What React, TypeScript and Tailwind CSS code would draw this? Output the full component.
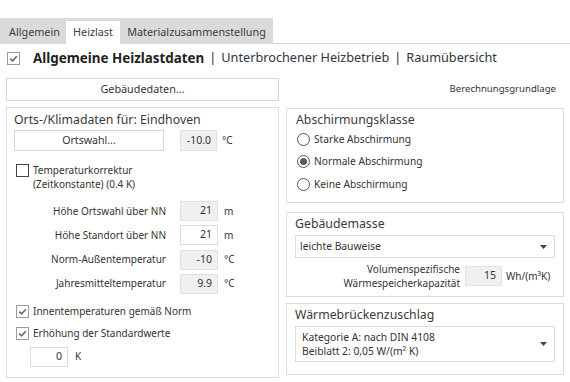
import type { ReactNode } from "react";

function CheckBox({ checked = false }: { checked?: boolean }) {
  return (
    <span
      className={`flex h-[13px] w-[13px] shrink-0 items-center justify-center border bg-white ${
        checked ? "border-[#9a9a9a]" : "border-[#444]"
      }`}
    >
      {checked && (
        <svg width="9" height="9" viewBox="0 0 9 9">
          <path
            d="M1.2 4.6 L3.6 6.8 L7.8 2.2"
            fill="none"
            stroke="#6b6b6b"
            strokeWidth="1.7"
          />
        </svg>
      )}
    </span>
  );
}

function Radio({ checked = false, label }: { checked?: boolean; label: string }) {
  return (
    <div className="flex h-[22.5px] items-center">
      <span className="flex h-[13px] w-[13px] shrink-0 items-center justify-center rounded-full border border-[#555] bg-white">
        {checked && <span className="h-[7px] w-[7px] rounded-full bg-[#5a5a5a]" />}
      </span>
      <span className="ml-[4px]">{label}</span>
    </div>
  );
}

function Field({ value, gray = false, className = "" }: { value: string; gray?: boolean; className?: string }) {
  return (
    <div
      className={`flex items-center justify-end border pr-[5px] text-[10.5px] ${
        gray ? "border-[#e0e0e0] bg-[#f0f0f0]" : "border-[#dcdcdc] bg-white"
      } ${className}`}
    >
      {value}
    </div>
  );
}

function Button({ children, className = "" }: { children: ReactNode; className?: string }) {
  return (
    <div className={`flex items-center justify-center border border-[#d6d6d6] bg-white text-[10.6px] ${className}`}>
      {children}
    </div>
  );
}

function Group({ title, children, className = "" }: { title: string; children: ReactNode; className?: string }) {
  return (
    <div className={`flex flex-col border border-[#dcdcdc] ${className}`}>
      <div className="flex h-[20px] items-center text-[12.3px] text-[#3a3a3a]">{title}</div>
      {children}
    </div>
  );
}

function Arrow() {
  return (
    <svg width="7" height="4" viewBox="0 0 7 4" className="mr-[7px] shrink-0">
      <path d="M0 0 H7 L3.5 4 Z" fill="#444" />
    </svg>
  );
}

function ValueRow({ label, value, unit, gray }: { label: string; value: string; unit: string; gray?: boolean }) {
  return (
    <div className="flex h-[20px] items-center">
      <span className="w-[152px] text-right">{label}</span>
      <Field value={value} gray={gray} className="ml-[14px] h-[20px] w-[38px]" />
      <span className="ml-[6px]">{unit}</span>
    </div>
  );
}

export default function App() {
  return (
    <div className="h-[382px] w-[570px] overflow-hidden bg-white pt-[18px] font-['Noto_Sans',sans-serif] text-[10px] text-[#333]">
      <div className="flex h-[26px]">
        <div className="flex w-[273px] items-end bg-[#dadada] pl-[3px] text-[10.8px] text-[#3c3c3c]">
          <div className="flex h-[23px] w-[63px] items-center justify-center">Allgemein</div>
          <div className="flex h-[23px] w-[54px] items-center justify-center bg-white">Heizlast</div>
          <div className="flex h-[23px] w-[153px] items-center justify-center">Materialzusammenstellung</div>
        </div>
        <div className="flex-1 border-b border-[#d6d6d6]" />
      </div>

      <div className="flex h-[28px] items-center pl-[7px] text-[12.7px] text-[#2f3440]">
        <CheckBox checked />
        <span className="ml-[13px] text-[13.4px] font-bold text-[#222]">Allgemeine Heizlastdaten</span>
        <span className="mx-[5px] text-[#222]">|</span>
        <span>Unterbrochener Heizbetrieb</span>
        <span className="mx-[5px] text-[#222]">|</span>
        <span>Raumübersicht</span>
      </div>

      <div className="mt-[6px] flex gap-[7px] px-[6px]">
        <div className="flex w-[274px] flex-col">
          <Button className="h-[23px] text-[10.8px]">Gebäudedaten...</Button>

          <Group title="Orts-/Klimadaten für: Eindhoven" className="mt-[6px] h-[271px] px-[7px] pt-[2px]">
            <div className="flex h-[21px] items-center">
              <Button className="h-[21px] w-[150px]">Ortswahl...</Button>
              <Field value="-10.0" gray className="ml-[16px] h-[21px] w-[37px]" />
              <span className="ml-[5px]">°C</span>
            </div>

            <div className="mt-[12px] flex pl-[2px]">
              <div className="pt-[1px]">
                <CheckBox />
              </div>
              <div className="ml-[4px] leading-[14px]">
                <div>Temperaturkorrektur</div>
                <div>(Zeitkonstante) (0.4 K)</div>
              </div>
            </div>

            <div className="mt-[10px] flex flex-col gap-[4.3px]">
              <ValueRow label="Höhe Ortswahl über NN" value="21" unit="m" gray />
              <ValueRow label="Höhe Standort über NN" value="21" unit="m" />
              <ValueRow label="Norm-Außentemperatur" value="-10" unit="°C" gray />
              <ValueRow label="Jahresmitteltemperatur" value="9.9" unit="°C" gray />
            </div>

            <div className="mt-[10px] flex h-[16px] items-center pl-[2px]">
              <CheckBox checked />
              <span className="ml-[4px]">Innentemperaturen gemäß Norm</span>
            </div>
            <div className="mt-[6px] flex h-[16px] items-center pl-[2px]">
              <CheckBox checked />
              <span className="ml-[4px]">Erhöhung der Standardwerte</span>
            </div>
            <div className="mt-[5px] flex h-[20px] items-center pl-[16px]">
              <Field value="0" className="h-[20px] w-[38px]" />
              <span className="ml-[7px]">K</span>
            </div>
          </Group>
        </div>

        <div className="flex w-[279px] flex-col">
          <div className="flex h-[23px] items-center justify-end pr-[8px] text-[9.6px]">Berechnungsgrundlage</div>

          <Group title="Abschirmungsklasse" className="mt-[7px] h-[95px] pl-[9px] pt-[1px]">
            <div className="mt-[-2px] flex flex-col pl-[1px] text-[10.2px]">
              <Radio label="Starke Abschirmung" />
              <Radio label="Normale Abschirmung" checked />
              <Radio label="Keine Abschirmung" />
            </div>
          </Group>

          <Group title="Gebäudemasse" className="mt-[9px] h-[85px] pl-[8px] pr-[8px] pt-[1px]">
            <div className="mt-[1px] flex h-[23px] items-center justify-between border border-[#dcdcdc] pl-[4px] text-[10.3px]">
              <span>leichte Bauweise</span>
              <Arrow />
            </div>
            <div className="mt-[4px] flex items-center">
              <div className="w-[165px] text-right leading-[14px]">
                <div>Volumenspezifische</div>
                <div>Wärmespeicherkapazität</div>
              </div>
              <Field value="15" gray className="ml-[5px] h-[20px] w-[37px]" />
              <span className="ml-[4px]">Wh/(m³K)</span>
            </div>
          </Group>

          <Group title="Wärmebrückenzuschlag" className="mt-[6px] h-[72px] pl-[8px] pr-[8px] pt-[1px]">
            <div className="mt-[1px] flex h-[36px] items-center justify-between border border-[#dcdcdc] pl-[6px] text-[10.3px]">
              <div className="leading-[14px]">
                <div>Kategorie A: nach DIN 4108</div>
                <div>Beiblatt 2: 0,05 W/(m² K)</div>
              </div>
              <Arrow />
            </div>
          </Group>
        </div>
      </div>
    </div>
  );
}
